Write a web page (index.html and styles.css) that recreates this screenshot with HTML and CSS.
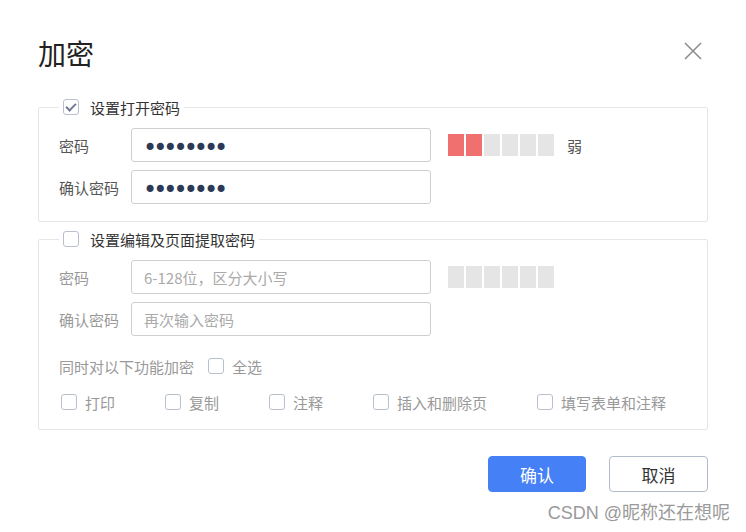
FILE: index.html
```html
<!DOCTYPE html>
<html lang="zh-CN">
<head>
  <meta charset="UTF-8" />
  <meta name="viewport" content="width=device-width, initial-scale=1" />
  <title>加密</title>
  <link rel="stylesheet" href="styles.css">
</head>
<body>
  <div class="dialog">
    <div class="head">
      <h1>加密</h1>
      <svg class="close" width="18" height="18" viewBox="0 0 18 18">
        <path d="M1 1 L17 17 M17 1 L1 17" stroke="#8a8a8a" stroke-width="1.5" fill="none"/>
      </svg>
    </div>

    <fieldset class="group">
      <legend><span class="box checked"></span>设置打开密码</legend>
      <div class="row">
        <label>密码</label>
        <input type="password" value="12345678">
        <div class="meter">
          <i class="on"></i><i class="on"></i><i></i><i></i><i></i><i></i>
        </div>
        <span class="level">弱</span>
      </div>
      <div class="row">
        <label>确认密码</label>
        <input type="password" value="12345678">
      </div>
    </fieldset>

    <fieldset class="group off">
      <legend><span class="box"></span>设置编辑及页面提取密码</legend>
      <div class="row">
        <label>密码</label>
        <input type="text" placeholder="6-128位，区分大小写">
        <div class="meter">
          <i></i><i></i><i></i><i></i><i></i><i></i>
        </div>
      </div>
      <div class="row">
        <label>确认密码</label>
        <input type="text" placeholder="再次输入密码">
      </div>
      <div class="line first">
        <span>同时对以下功能加密</span>
        <span class="opt"><span class="box"></span>全选</span>
      </div>
      <div class="line opts">
        <span class="opt"><span class="box"></span>打印</span>
        <span class="opt"><span class="box"></span>复制</span>
        <span class="opt"><span class="box"></span>注释</span>
        <span class="opt"><span class="box"></span>插入和删除页</span>
        <span class="opt"><span class="box"></span>填写表单和注释</span>
      </div>
    </fieldset>

    <div class="actions">
      <button class="btn primary">确认</button>
      <button class="btn">取消</button>
    </div>
  </div>
  <div class="mark">CSDN @昵称还在想呢</div>
</body>
</html>
```

FILE: styles.css
```css
body {
  margin: 0;
  background: #fff;
  font-family: "Noto Sans CJK SC", "Noto Sans", sans-serif;
  color: #333;
}

.dialog {
  padding: 33px 38px 0 38px;
}

.head {
  display: flex;
  align-items: center;
  justify-content: space-between;
  height: 40px;
}

.head h1 {
  margin: 0;
  font-size: 28px;
  font-weight: normal;
  line-height: 40px;
  color: #222;
}

.close {
  margin-right: 6px;
  margin-top: -4px;
}

.group {
  margin: 24px 0 0 0;
  padding: 11px 20px 17px 20px;
  border: 1px solid #e6e6e6;
  border-radius: 2px;
}

.group + .group {
  margin-top: 7px;
}

.group legend {
  padding: 0 4px;
  display: flex;
  align-items: center;
  height: 20px;
  font-size: 15px;
  color: #333;
}

.group legend .box {
  margin-right: 11px;
}

.box {
  display: inline-block;
  box-sizing: border-box;
  width: 16px;
  height: 16px;
  border: 1.5px solid #b9bfcc;
  border-radius: 3px;
  background: #fff;
  position: relative;
}

.box.checked::after {
  content: "";
  position: absolute;
  left: 4px;
  top: 1px;
  width: 4px;
  height: 8px;
  border: solid #747d93;
  border-width: 0 2px 2px 0;
  transform: rotate(45deg);
}

.row {
  display: flex;
  align-items: center;
  height: 34px;
}

.row + .row {
  margin-top: 8px;
}

.row label {
  width: 72px;
  font-size: 15px;
  color: #555;
}

.row input {
  box-sizing: border-box;
  width: 300px;
  height: 34px;
  border: 1px solid #cfcfcf;
  border-radius: 3px;
  padding: 0 12px;
  font-family: inherit;
  font-size: 15px;
  color: #2c3a55;
  outline: none;
}

.row input[type="password"] {
  font-family: "DejaVu Sans", sans-serif;
  font-size: 24px;
  letter-spacing: -4px;
  padding: 6px 12px 0 11px;
}

.row input::placeholder {
  color: #aaa;
}

.meter {
  display: flex;
  gap: 2px;
  margin-left: 17px;
}

.meter i {
  width: 16px;
  height: 22px;
  background: #e5e5e5;
}

.meter i.on {
  background: #f07070;
}

.level {
  margin-left: 13px;
  font-size: 15px;
  color: #555;
}

.off .row label,
.off .line {
  color: #999;
}

.line {
  display: flex;
  align-items: center;
  height: 20px;
  font-size: 15px;
}

.line.first {
  margin-top: 20px;
}

.line.first .opt {
  margin-left: 14px;
}

.line.opts {
  margin-top: 16px;
  padding-left: 2px;
  gap: 50px;
}

.opt {
  display: flex;
  align-items: center;
}

.opt .box {
  margin-right: 8px;
}

.actions {
  display: flex;
  justify-content: flex-end;
  gap: 23px;
  margin-top: 26px;
}

.btn {
  width: 99px;
  height: 36px;
  border: 1px solid #b3bccb;
  border-radius: 4px;
  background: #fff;
  font-family: inherit;
  font-size: 17px;
  color: #333;
}

.btn.primary {
  width: 98px;
  border-color: #4680f6;
  background: #4680f6;
  color: #fff;
}

.mark {
  position: absolute;
  right: 16px;
  bottom: 8px;
  font-family: "Liberation Sans", "Noto Sans CJK SC", sans-serif;
  font-size: 18px;
  color: #9a9a9a;
  text-shadow: 1px 1px 1px #fff;
}
```
